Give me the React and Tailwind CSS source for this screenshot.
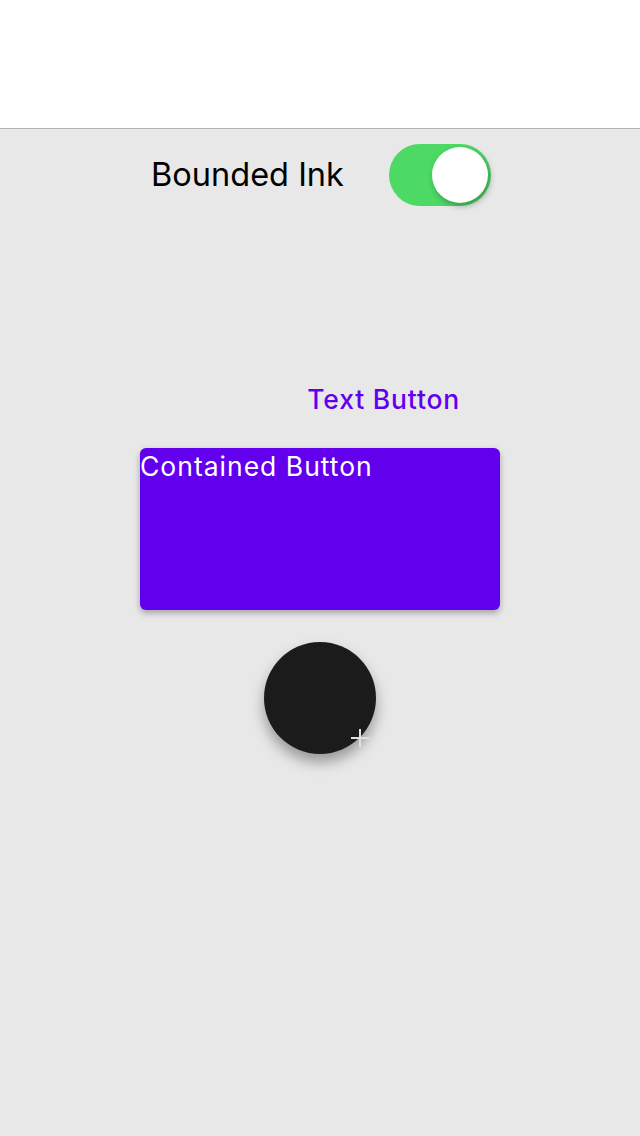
import React, { useState } from "react";

// iOS-style switch
function Switch({ on, onChange }) {
    return (
        <button
            onClick={() => onChange(!on)}
            className={`relative w-[102px] h-[62px] rounded-full transition ${on ? "bg-[#4cd964]" : "bg-[#e5e5e5]"}`}
        >
            <span
                className={`absolute top-[3px] w-[56px] h-[56px] rounded-full bg-white shadow-[2px_3px_6px_rgba(0,0,0,0.3)] transition-all ${on ? "left-[43px]" : "left-[3px]"}`}
            />
        </button>
    );
}

export default function App() {
    const [bounded, setBounded] = useState(true);

    return (
        <div className="w-[640px] h-[1136px] flex flex-col bg-[#e8e8e8] font-['Inter',sans-serif]">
            {/* header */}
            <div className="h-[129px] bg-white border-b border-[#b2b2b2]" />

            {/* toggle row */}
            <div className="flex items-center justify-center gap-[45px] pt-[15px] pl-[2px]">
                <span className="text-[32.5px] text-black leading-[40px]">Bounded Ink</span>
                <Switch on={bounded} onChange={setBounded} />
            </div>

            {/* buttons */}
            <div className="flex flex-col items-center mt-[177px]">
                <div className="w-[360px] flex justify-end pr-[40px]">
                    <button className="text-[26.5px] font-medium tracking-[0.8px] text-[#6200ee] leading-[32px]">Text Button</button>
                </div>

                <button className="mt-[33px] w-[360px] h-[162px] rounded-[6px] bg-[#6200ee] text-white text-[26.5px] tracking-[1px] leading-[36px] text-left items-start flex shadow-[0_3px_6px_rgba(0,0,0,0.3)]">
                    Contained Button
                </button>

                <button className="relative mt-[32px] w-[112px] h-[112px] rounded-full bg-[#1b1b1b] shadow-[0_8px_14px_rgba(0,0,0,0.35)]">
                    <svg className="absolute left-[87px] top-[87px]" width="18" height="18" viewBox="0 0 18 18">
                        <path d="M9 0v18M0 9h18" stroke="#e0e0e0" strokeWidth="2" />
                    </svg>
                </button>
            </div>
        </div>
    );
}
